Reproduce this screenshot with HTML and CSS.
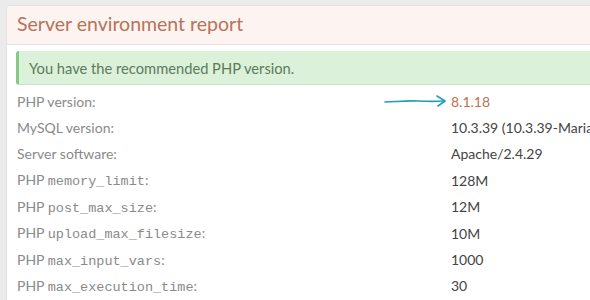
FILE: index.html
```html
<!DOCTYPE html>
<html lang="en">
<head>
    <meta charset="UTF-8">
    <title>Server environment report</title>
    <link rel="stylesheet" href="styles.css">
</head>
<body>
<div class="box">
    <h2 class="box-title">Server environment report</h2>
    <div class="box-body">
        <div class="notice">You have the recommended PHP version.</div>
        <table class="report">
            <tr>
                <td class="label">PHP version:</td>
                <td class="value good">
                    <svg class="arrow" width="64" height="14" viewBox="0 0 64 14">
                        <path d="M1 8 C14 7.5 24 6.5 34 7 C44 7.5 52 7.5 60 7" fill="none" stroke="#1fa0b8" stroke-width="1.6" stroke-linecap="round"/>
                        <path d="M53 2 L61 7 L54 12" fill="none" stroke="#1fa0b8" stroke-width="1.6" stroke-linecap="round" stroke-linejoin="round"/>
                    </svg>
                    8.1.18
                </td>
            </tr>
            <tr><td class="label">MySQL version:</td><td class="value">10.3.39 (10.3.39-MariaDB-0ubuntu0.20.04.2)</td></tr>
            <tr><td class="label">Server software:</td><td class="value">Apache/2.4.29</td></tr>
            <tr><td class="label">PHP <code>memory_limit</code>:</td><td class="value">128M</td></tr>
            <tr><td class="label">PHP <code>post_max_size</code>:</td><td class="value">12M</td></tr>
            <tr><td class="label">PHP <code>upload_max_filesize</code>:</td><td class="value">10M</td></tr>
            <tr><td class="label">PHP <code>max_input_vars</code>:</td><td class="value">1000</td></tr>
            <tr><td class="label">PHP <code>max_execution_time</code>:</td><td class="value">30</td></tr>
        </table>
    </div>
</div>
</body>
</html>
```

FILE: styles.css
```css
html, body {
    height: 100%;
    overflow: hidden;
}
body {
    font-family: Lato, "Open Sans", sans-serif;
    background: #ebebeb;
    margin: 0;
    padding: 5px 0 0 6px;
}
.box {
    background: white;
    border: 1px solid #e2e2e2;
    border-right: none;
    border-radius: 3px 0 0 0;
    height: 100%;
    overflow: hidden;
}
.box-title {
    margin: 0;
    padding: 6px 10px 0;
    height: 32px;
    background: #fdf3f0;
    border-bottom: 1px solid #ebe2df;
    color: #b57459;
    font-size: 19.5px;
    font-weight: normal;
}
.box-body {
    padding: 6px 0 0 9px;
}
.notice {
    background: #dcf1da;
    border-left: 3px solid #85c985;
    border-bottom: 1px solid #cde0cb;
    border-radius: 3px 0 0 3px;
    color: #5c7a5c;
    font-size: 14.7px;
    padding: 8px 10px 7px;
}
.report {
    border-collapse: collapse;
    table-layout: fixed;
    width: 900px;
    margin-top: 3px;
    font-size: 14px;
    color: #8a8a8a;
}
.report td {
    padding: 0 0 0 1px;
    height: 26.4px;
    white-space: nowrap;
}
.report td.label {
    width: 434px;
}
.report td.value {
    padding-left: 0;
    color: #444;
    position: relative;
}
.report td.good {
    color: #c0714f;
}
.report code {
    font-family: "Liberation Mono", monospace;
    font-size: 13.5px;
    color: #8a8a8a;
}
.arrow {
    position: absolute;
    left: -67px;
    top: 6px;
}
```
